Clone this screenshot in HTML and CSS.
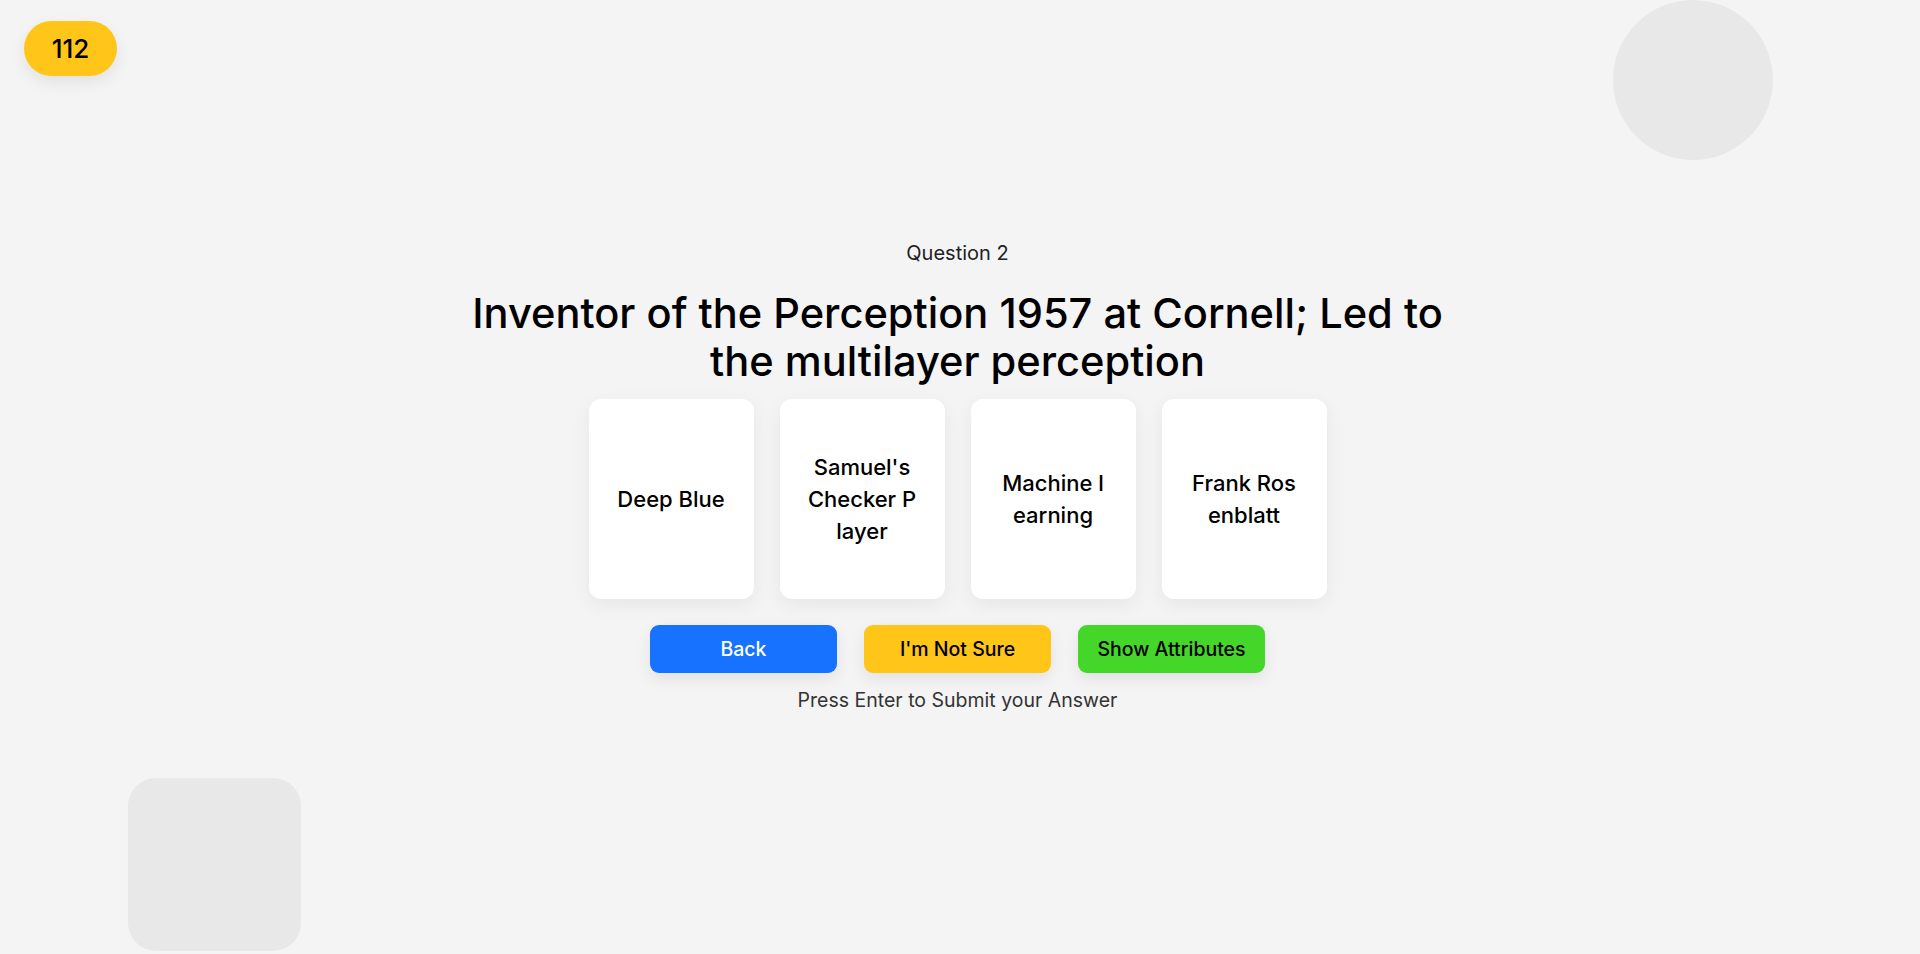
FILE: index.html
```html
<!DOCTYPE html>
<html lang="en">
<head>
<meta charset="utf-8">
<title>Quiz</title>
<link rel="stylesheet" href="styles.css">
</head>
<body>
<div class="score-badge">112</div>
<div class="deco deco-circle"></div>
<div class="deco deco-square"></div>
<main class="quiz">
  <div class="question-label">Question 2</div>
  <h1 class="question-title">Inventor of the Perception 1957 at Cornell; Led to the multilayer perception</h1>
  <div class="cards">
    <div class="card"><span>Deep Blue</span></div>
    <div class="card"><span>Samuel's Checker Player</span></div>
    <div class="card"><span>Machine learning</span></div>
    <div class="card"><span>Frank Rosenblatt</span></div>
  </div>
  <div class="actions">
    <button class="btn btn-back">Back</button>
    <button class="btn btn-unsure">I'm Not Sure</button>
    <button class="btn btn-attrs">Show Attributes</button>
  </div>
  <div class="hint">Press Enter to Submit your Answer</div>
</main>
</body>
</html>
```
FILE: styles.css
```css
* { box-sizing: border-box; }
html, body { margin: 0; padding: 0; }
body {
  background: #f4f4f4;
  font-family: "Inter", "Noto Sans", sans-serif;
  color: #000;
  min-height: 100vh;
  overflow: hidden;
}
.score-badge {
  position: absolute;
  left: 24px;
  top: 21px;
  width: 93px;
  height: 55px;
  border-radius: 28px;
  background: #ffc619;
  box-shadow: 0 6px 16px rgba(0,0,0,0.08);
  display: flex;
  align-items: center;
  justify-content: center;
  font-size: 26px;
  font-weight: 500;
  z-index: 2;
}
.deco { position: absolute; background: #e8e8e8; z-index: 0; }
.deco-circle {
  right: 147px;
  top: 0;
  width: 160px;
  height: 160px;
  border-radius: 50%;
}
.deco-square {
  left: 128px;
  top: 778px;
  width: 173px;
  height: 173px;
  border-radius: 28px;
}
.quiz {
  position: relative;
  z-index: 1;
  min-height: 100vh;
  display: flex;
  flex-direction: column;
  align-items: center;
  justify-content: center;
  padding-right: 5px;
}
.question-label {
  font-size: 20px;
  line-height: 27px;
  color: #222;
}
.question-title {
  margin: 22px 0 14px;
  max-width: 1040px;
  font-size: 41.6px;
  line-height: 48px;
  font-weight: 500;
  text-align: center;
}
.cards {
  display: flex;
  gap: 26px;
}
.card {
  width: 165px;
  height: 200px;
  background: #fff;
  border-radius: 12px;
  box-shadow: 0 6px 20px rgba(0,0,0,0.06);
  display: flex;
  align-items: center;
  justify-content: center;
  padding: 0 27px;
  text-align: center;
  word-break: break-all;
  font-size: 22px;
  line-height: 32px;
  font-weight: 500;
}
.actions {
  display: flex;
  gap: 27px;
  margin-top: 26px;
}
.btn {
  width: 187px;
  height: 48px;
  border: none;
  border-radius: 9px;
  font-family: inherit;
  font-size: 19.5px;
  font-weight: 500;
  color: #000;
  box-shadow: 0 6px 16px rgba(0,0,0,0.08);
  cursor: pointer;
}
.btn-back { background: #1672ff; color: #fff; }
.btn-unsure { background: #ffc619; }
.btn-attrs { background: #45d62a; }
.hint {
  margin-top: 14px;
  font-size: 19.5px;
  line-height: 27px;
  color: #333;
}
```
